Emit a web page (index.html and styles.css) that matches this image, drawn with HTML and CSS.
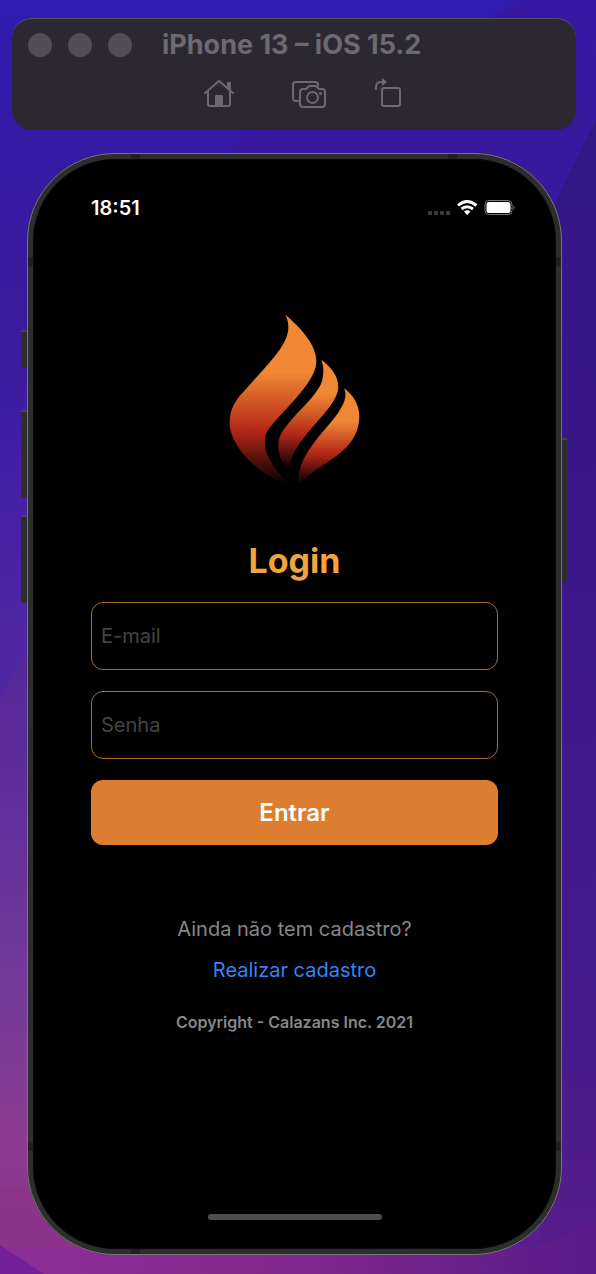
FILE: index.html
```html
<!DOCTYPE html>
<html lang="pt-BR">
<head>
<meta charset="utf-8">
<meta name="viewport" content="width=device-width, initial-scale=1">
<title>Login</title>
<link rel="stylesheet" href="styles.css">
</head>
<body>
<svg class="wallpaper" viewBox="0 0 596 1274" preserveAspectRatio="none" aria-hidden="true">
  <defs>
    <linearGradient id="base" x1="0" y1="0" x2="0" y2="1">
      <stop offset="0" stop-color="#301cb2"/><stop offset=".12" stop-color="#341aa4"/>
      <stop offset=".25" stop-color="#3a1b9c"/><stop offset=".35" stop-color="#411ea5"/>
      <stop offset=".5" stop-color="#4f27a4"/><stop offset="1" stop-color="#5a1c90"/>
    </linearGradient>
    <linearGradient id="left" gradientUnits="userSpaceOnUse" x1="0" y1="600" x2="0" y2="1274">
      <stop offset="0" stop-color="#522499"/><stop offset=".25" stop-color="#5e2d9c"/>
      <stop offset=".6" stop-color="#753b99"/><stop offset=".8" stop-color="#8c3b90"/>
      <stop offset="1" stop-color="#8d3090"/>
    </linearGradient>
    <linearGradient id="right" x1="0" y1="0" x2="0" y2="1">
      <stop offset="0" stop-color="#331585"/><stop offset=".35" stop-color="#3b1789"/>
      <stop offset=".8" stop-color="#451b8c"/><stop offset="1" stop-color="#5a1c8a"/>
    </linearGradient>
    <linearGradient id="floor" x1="0" y1="0" x2="1" y2="0">
      <stop offset="0" stop-color="#8c3098"/><stop offset=".45" stop-color="#85298f"/>
      <stop offset="1" stop-color="#581b88"/>
    </linearGradient>
  </defs>
  <rect width="596" height="1274" fill="url(#base)"/>
  <path d="M490 17 520 0h76v130L556 195H200l50-70Z" fill="#3a189a" opacity=".6"/>
  <path d="M596 120 540 232V1274h56Z" fill="url(#right)"/>
  <path d="M0 700 60 590H300V1274H0Z" fill="url(#left)"/>
  <path d="M0 1187h300v70H0Z" fill="#8b3588" opacity=".7"/>
  <path d="M0 1247H540L596 1220V1274H0Z" fill="url(#floor)"/>
  <path d="M0 1245 44 1274H0Z" fill="#74209a"/>
</svg>

<div class="desktop">
  <header class="toolbar">
    <div class="title-row">
      <span class="lights"><i class="light"></i><i class="light"></i><i class="light"></i></span>
      <span class="title">iPhone 13 – iOS 15.2</span>
    </div>
    <div class="actions">
      <button class="action home" type="button" aria-label="Home">
        <svg width="32" height="32" viewBox="0 0 32 32">
          <path d="M2 16 16 4l14 12M5 14v13q0 2 2 2h18q2 0 2-2V14M25 10V6h2v6"/>
          <path class="solid" d="M12 19q0-1 1-1h6q1 0 1 1v10h-8Z"/>
        </svg>
      </button>
      <button class="action" type="button" aria-label="Screenshot">
        <svg width="36" height="32" viewBox="0 0 36 32">
          <path d="M8 24H5q-3 0-3-3V8q0-3 3-3h19q3 0 3 3v1"/>
          <path d="M12 12h3l2-2q1-1 2-1h5q1 0 2 1l2 2h3q3 0 3 3v12q0 3-3 3H12q-3 0-3-3V15q0-3 3-3Z"/>
          <circle cx="21.500" cy="20.500" r="5.500"/>
          <circle class="solid" cx="29.500" cy="16.500" r="1.500"/>
        </svg>
      </button>
      <button class="action" type="button" aria-label="Rotate">
        <svg width="30" height="32" viewBox="0 0 30 32">
          <rect x="9" y="11" width="18" height="18" rx="2"/>
          <path d="M3 12v-2q0-5 5-5h3"/>
          <path class="solid" d="m9 1 5 4-5 4Z"/>
        </svg>
      </button>
    </div>
  </header>

  <main class="phone">
    <i class="key mute"></i><i class="key volume-up"></i><i class="key volume-down"></i><i class="key power"></i>
    <i class="band top-left"></i><i class="band top-right"></i>
    <i class="band bottom-left"></i>
    <i class="band side left-high"></i><i class="band side left-low"></i>
    <i class="band side right-high"></i><i class="band side right-low"></i>

    <div class="status">
      <time>18:51</time>
      <svg width="88" height="18" viewBox="0 0 88 18" aria-label="Wi-Fi, bateria cheia" role="img">
        <g fill="#3d3d3d"><rect x="0" y="12" width="4" height="4" rx="1"/><rect x="6" y="12" width="4" height="4" rx="1"/><rect x="12" y="12" width="4" height="4" rx="1"/><rect x="18" y="12" width="4" height="4" rx="1"/></g>
        <g fill="none" stroke="#fff" stroke-width="3"><path d="M30 6.500Q39-1.500 48.500 6.500"/><path d="M33.500 10Q39 5.500 45 10"/></g>
        <path d="M36 12.500q3.200-2.500 6.500 0L39.200 16Z" fill="#fff"/>
        <rect x="57" y="1.500" width="27" height="14" rx="4" fill="none" stroke="#777"/>
        <rect x="58.500" y="3" width="24" height="11" rx="2.500" fill="#fff"/>
        <path d="M85.500 6.500q2 2 0 4.500Z" fill="#777"/>
      </svg>
    </div>

    <svg class="logo" viewBox="58 43 393 516" role="img" aria-label="Chama">
      <defs>
        <linearGradient id="f1" gradientUnits="userSpaceOnUse" x1="0" y1="220" x2="0" y2="556"><stop stop-color="#ef8733"/><stop offset=".53" stop-color="#b02418"/><stop offset="1" stop-color="#000"/></linearGradient>
        <linearGradient id="f2" gradientUnits="userSpaceOnUse" x1="0" y1="285" x2="0" y2="508"><stop stop-color="#ef8733"/><stop offset=".55" stop-color="#b02418"/><stop offset="1" stop-color="#000"/></linearGradient>
        <linearGradient id="f3" gradientUnits="userSpaceOnUse" x1="0" y1="365" x2="0" y2="553"><stop stop-color="#ef8733"/><stop offset=".53" stop-color="#b02418"/><stop offset="1" stop-color="#000"/></linearGradient>
      </defs>
      <path fill="url(#f1)" d="M227 45C270 82 320 132 320 186C320 250 210 340 174 393C166 405 166 412 166 430C166 480 215 525 238 556C150 530 60 440 60 370C60 330 75 305 100 278C140 232 180 192 210 150C238 110 243 78 227 45Z"/>
      <path fill="url(#f2)" d="M335 180C360 200 386 225 386 262C386 330 240 420 240 508C218 495 206 470 206 435C206 405 225 385 250 355C290 310 330 275 338 240C343 215 342 200 335 180Z"/>
      <path fill="url(#f3)" d="M403 266C430 285 449 315 449 352C449 400 420 440 385 465C340 498 300 520 268 553C262 500 290 460 320 420C360 370 425 310 403 266Z"/>
    </svg>

    <h1 class="heading">Login</h1>
    <form class="form">
      <input class="field" type="email" placeholder="E-mail" aria-label="E-mail">
      <input class="field" type="password" placeholder="Senha" aria-label="Senha">
      <button class="submit" type="button">Entrar</button>
    </form>
    <p class="question">Ainda não tem cadastro?</p>
    <a class="signup" href="#">Realizar cadastro</a>
    <p class="copyright">Copyright - Calazans Inc. 2021</p>
    <div class="home-bar"></div>
  </main>
</div>
</body>
</html>
```
FILE: styles.css
```css
* { box-sizing: border-box; }

body {
  margin: 0;
  min-height: 100vh;
  position: relative;
  background: #3a1b9c;
  font-family: Inter, "Liberation Sans", sans-serif;
}

.wallpaper {
  position: absolute;
  inset: 0;
  width: 100%;
  height: 100%;
}

.desktop {
  position: relative;
  padding: 18px 20px 19px 12px;
}

.toolbar {
  height: 112px;
  padding: 9px 16px;
  border-top: 1px solid #57535c;
  border-radius: 20px;
  background: #2c2832;
  color: #6d6973;
}

.title-row {
  display: flex;
  align-items: center;
  gap: 30px;
  height: 34px;
}

.lights { display: flex; gap: 16px; }

.light {
  width: 24px;
  height: 24px;
  border-radius: 50%;
  background: #514d57;
}

.title {
  font-size: 27px;
  font-weight: 700;
  line-height: 32px;
  white-space: nowrap;
}

.actions {
  display: flex;
  justify-content: center;
  gap: 46px;
  padding: 15px 0 0 18px;
}

.action {
  display: flex;
  padding: 0;
  border: 0;
  background: none;
  color: inherit;
}

.home { margin-right: 10px; }

.action svg {
  fill: none;
  stroke: currentColor;
  stroke-width: 2;
  stroke-linecap: round;
  stroke-linejoin: round;
}

.action .solid { fill: currentColor; stroke: none; }

.phone {
  position: relative;
  display: flex;
  flex-direction: column;
  align-items: center;
  margin: 23px 14px 0 15px;
  padding: 36px 58px 29px;
  border: 6px solid #2d2d2d;
  border-radius: 88px;
  background: #000;
  box-shadow: inset 0 0 0 1px #080808;
}

.phone::before {
  content: "";
  position: absolute;
  inset: -6px;
  border: 1px solid #77757c;
  border-radius: 88px;
}

.key {
  position: absolute;
  left: -12px;
  width: 6px;
  border-top: 2px solid #48424f;
  background: #2e2d30;
}

.mute { top: 171px; height: 38px; }
.volume-up { top: 251px; height: 88px; }
.volume-down { top: 356px; height: 88px; }
.power { top: 279px; right: -11px; left: auto; width: 5px; height: 144px; }

.band {
  position: absolute;
  width: 9px;
  height: 5px;
  background: #202020;
}

.top-left { top: -5px; left: 98px; }
.top-right { top: -5px; right: 99px; }
.bottom-left { bottom: -5px; left: 98px; }
.side { width: 5px; height: 9px; }
.left-high { top: 98px; left: -5px; }
.left-low { bottom: 98px; left: -5px; }
.right-high { top: 98px; right: -5px; }
.right-low { bottom: 98px; right: -5px; }

.status {
  display: flex;
  justify-content: space-between;
  align-items: center;
  align-self: stretch;
  height: 26px;
  margin-right: -18px;
  color: #fff;
  font-size: 20px;
  font-weight: 600;
}

.logo { width: 131px; height: 172px; margin-top: 93px; }

.heading {
  margin: 53px 0 19px;
  color: #f2a33c;
  font-size: 34px;
  font-weight: 700;
  line-height: 44px;
}

.form {
  display: grid;
  gap: 21px;
  width: 100%;
}

.field {
  width: 100%;
  height: 68px;
  padding: 0 9px;
  border: 1px solid #a9701f;
  border-radius: 12px;
  outline: 0;
  background: #000;
  color: #fff;
  font: 400 20px Inter, "Liberation Sans", sans-serif;
}

.field::placeholder { color: #444; opacity: 1; }

.submit {
  height: 65px;
  border: 0;
  border-radius: 12px;
  background: #dc7d2f;
  color: #fff;
  font: 600 24px Inter, "Liberation Sans", sans-serif;
}

.question {
  margin: 70px 0 13px;
  color: #87878a;
  font-size: 20px;
  line-height: 28px;
}

.signup {
  color: #3485f7;
  font-size: 20px;
  line-height: 28px;
  text-decoration: none;
}

.copyright {
  margin: 26px 0 0;
  color: #87878a;
  font-size: 16px;
  font-weight: 600;
  line-height: 24px;
}

.home-bar {
  width: 174px;
  height: 6px;
  margin-top: 180px;
  border-radius: 3px;
  background: #4d4d4d;
}
```
